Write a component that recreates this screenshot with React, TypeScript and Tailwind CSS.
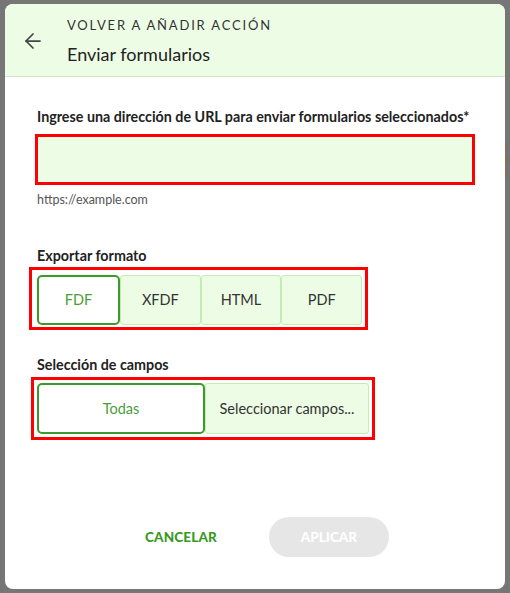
import React from "react";
import { ArrowLeft } from "lucide-react";

const formats = ["FDF", "XFDF", "HTML", "PDF"];

export default function App() {
  return (
    <div
      className="w-[510px] h-[593px] bg-[#767676] pt-[4px] pl-[5px] overflow-hidden relative"
      style={{ fontFamily: 'Lato, "Noto Sans", sans-serif' }}
    >
      {/* bits of the page behind the dialog */}
      <div className="absolute right-[1px] top-[142px] flex flex-col">
        <div className="w-[8px] h-[12px] rounded-full border border-[#7b6aa0] bg-[#7e7356]" />
        <div className="w-[8px] h-[12px] rounded-full border border-[#7b6aa0] bg-[#7e7356]" />
        <div className="w-[8px] h-[12px] rounded-full border border-[#7b6aa0] bg-[#7e7356]" />
      </div>

      <div className="w-[500px] h-[585px] bg-white rounded-[8px] flex flex-col overflow-hidden relative">
        <div className="h-[73px] bg-[#edfde5] border-b border-[#d3e5cb] flex items-center">
          <div className="w-[62px] pl-[16px] flex items-center pt-[2px]">
            <ArrowLeft size={24} strokeWidth={1.75} className="text-[#444]" />
          </div>
          <div className="flex flex-col pt-[2px]">
            <span className="text-[13px] tracking-[0.14em] text-[#333] leading-[16px]">
              VOLVER A AÑADIR ACCIÓN
            </span>
            <span className="text-[18px] text-[#222] leading-[22px] mt-[10px]">
              Enviar formularios
            </span>
          </div>
        </div>

        <div className="flex-1 flex flex-col px-[24px] pt-[30px]">
          <label className="pl-[8px] text-[14.3px] font-bold text-[#222] leading-[20px] whitespace-nowrap">
            Ingrese una dirección de URL para enviar formularios seleccionados*
          </label>
          <div className="mt-[7px] w-[440px] h-[51px] ml-[6px] border-[3px] border-[#ff0000] bg-[#edfde5]" />
          <span className="pl-[8px] mt-[7px] text-[12.5px] text-[#555] leading-[16px]">
            https://example.com
          </span>

          <label className="pl-[8px] mt-[38px] text-[14.3px] font-bold text-[#222] leading-[20px]">
            Exportar formato
          </label>
          <div className="mt-[1px] w-[339px] h-[63px] border-[3px] border-[#ff0000] pl-[5px] pr-[3px] pt-[5px] pb-[2px] flex">
            {formats.map((f, i) =>
              i === 0 ? (
                <div
                  key={f}
                  className="w-[83px] h-[50px] rounded-[5px] border-2 border-[#3b9a2c] bg-white flex items-center justify-center text-[14.5px] text-[#47a035]"
                >
                  {f}
                </div>
              ) : (
                <div
                  key={f}
                  className="flex-1 h-[50px] rounded-[3px] border border-[#c4ecb6] bg-[#edfde5] flex items-center justify-center text-[14.5px] text-[#333]"
                >
                  {f}
                </div>
              )
            )}
          </div>

          <label className="pl-[8px] mt-[25px] text-[14.3px] font-bold text-[#222] leading-[20px]">
            Selección de campos
          </label>
          <div className="mt-[2px] ml-[2px] w-[344px] h-[63px] border-[3px] border-[#ff0000] pl-[3px] pr-[3px] pt-[3px] pb-[3px] flex">
            <div className="w-[168px] h-[51px] rounded-[5px] border-2 border-[#3b9a2c] bg-white flex items-center justify-center text-[14.5px] text-[#47a035]">
              Todas
            </div>
            <div className="flex-1 h-[51px] rounded-[3px] border border-[#c4ecb6] bg-[#edfde5] flex items-center justify-center text-[14.5px] text-[#333]">
              Seleccionar campos...
            </div>
          </div>

          <div className="mt-auto mb-[32px] flex items-center justify-center gap-[52px] pl-[24px]">
            <button className="text-[13.5px] font-black text-[#3a9a24] tracking-[0.01em]">
              CANCELAR
            </button>
            <button className="w-[120px] h-[40px] rounded-full bg-[#e6e6e6] text-[13.5px] font-black text-white">
              APLICAR
            </button>
          </div>
        </div>
      </div>
    </div>
  );
}
